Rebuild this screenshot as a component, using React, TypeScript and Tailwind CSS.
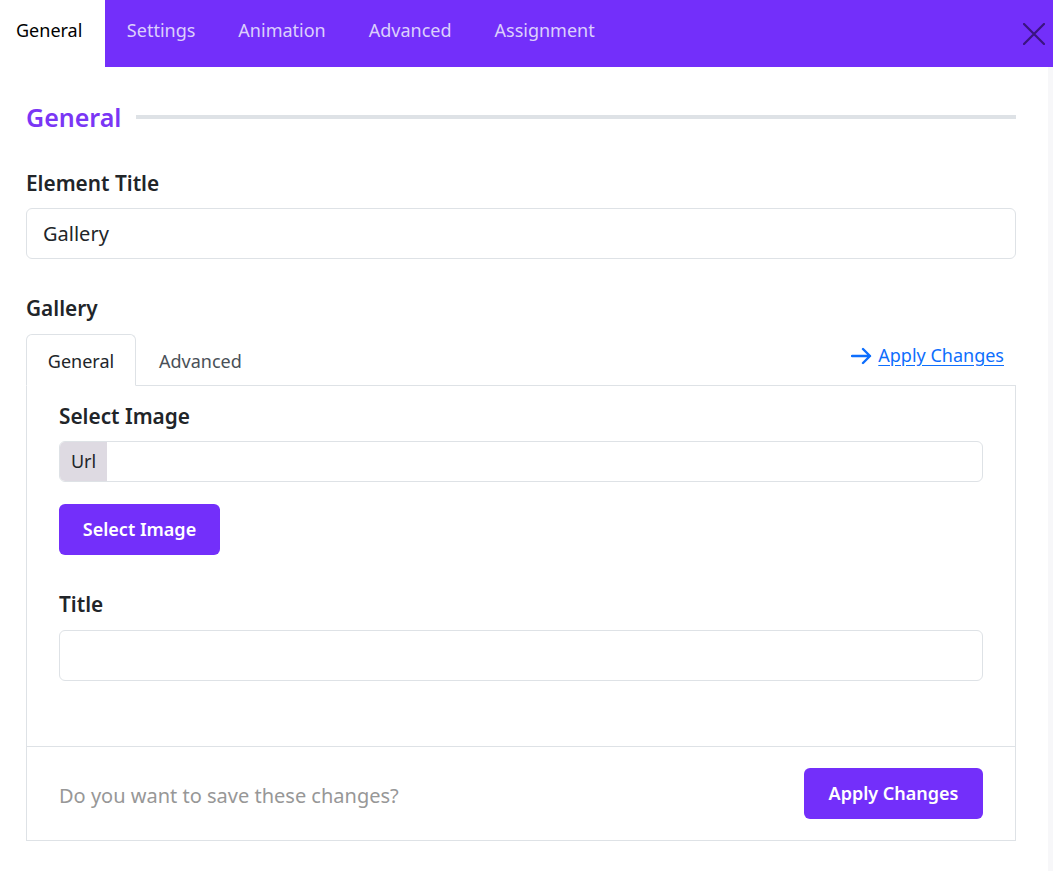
import React from "react";

const font = { fontFamily: '"Noto Sans", "Segoe UI", sans-serif' };

export default function App() {
  const tabs = ["Settings", "Animation", "Advanced", "Assignment"];
  return (
    <div className="w-[1053px] h-[871px] bg-white overflow-hidden text-[#212529]" style={font}>
      <div className="h-[67px] bg-[#732ffa] flex items-stretch">
        <div className="bg-white flex items-center pl-4 pr-[23px] pb-[7px] text-[18px] text-black">General</div>
        {tabs.map((t) => (
          <div key={t} className="flex items-center px-[21.5px] pb-[7px] text-[18px] text-[#dccffc]">
            {t}
          </div>
        ))}
        <div className="flex-1" />
        <div className="flex items-center pr-[8px]">
          <svg width="22" height="22" viewBox="0 0 22 22">
            <path d="M1 1 L21 21 M21 1 L1 21" stroke="#3a1480" strokeWidth="2.2" strokeLinecap="round" />
          </svg>
        </div>
      </div>
      <div className="flex h-[804px]">
        <div className="flex-1 px-[26px] pr-[32px]">
          <div className="mt-[34px] flex items-center gap-[15px]">
            <div className="text-[25px] leading-[32px] font-semibold text-[#7a36f5]">General</div>
            <div className="flex-1 h-[4px] bg-[#dee2e6]" />
          </div>
          <div className="mt-[35px] text-[20.8px] leading-[30px] font-semibold">Element Title</div>
          <div className="mt-[10px] h-[51px] border border-[#dee2e6] rounded-[6px] flex items-center px-4 text-[20px] text-[#212529]">
            Gallery
          </div>
          <div className="mt-[34px] text-[20.8px] leading-[30px] font-semibold">Gallery</div>
          <div className="mt-[11px]">
            <div className="flex border-b border-[#dee2e6] h-[52px]">
              <div className="-mb-px w-[110px] border border-[#dee2e6] border-b-white rounded-t-[6px] bg-white flex items-center justify-center pt-[2px] text-[18px] text-[#212529]">
                General
              </div>
              <div className="flex items-center px-[23px] pt-[3px] text-[18px] text-[#495057]">Advanced</div>
              <div className="flex-1" />
              <div className="flex items-start pt-[8px] pr-[12px]">
                <a className="flex items-center gap-[6px] text-[18px] text-[#0d6efd]">
                  <svg width="21" height="18" viewBox="0 0 21 18">
                    <path d="M1 9 H19 M12 2 L19 9 L12 16" stroke="#0d6efd" strokeWidth="2.4" fill="none" strokeLinecap="round" strokeLinejoin="round" />
                  </svg>
                  <span className="underline underline-offset-[3px]">Apply Changes</span>
                </a>
              </div>
            </div>
            <div className="border-x border-b border-[#dee2e6]">
              <div className="px-[32px] pt-[15px] pb-[65px]">
                <div className="text-[20.8px] leading-[30px] font-semibold">Select Image</div>
                <div className="mt-[10px] h-[41px] border border-[#dee2e6] rounded-[6px] flex overflow-hidden">
                  <div className="bg-[#dedae2] w-[47px] flex items-center justify-center text-[18px] text-[#212529]">Url</div>
                  <div className="flex-1" />
                </div>
                <button className="mt-[22px] h-[51px] w-[161px] bg-[#732ffa] rounded-[6px] text-white text-[18px] font-semibold">
                  Select Image
                </button>
                <div className="mt-[34px] text-[20.8px] leading-[30px] font-semibold">Title</div>
                <div className="mt-[11px] h-[51px] border border-[#dee2e6] rounded-[6px]" />
              </div>
              <div className="border-t border-[#dee2e6] px-[32px] py-[21px] flex items-center justify-between">
                <div className="text-[20px] text-[#979797] pt-[4px]">Do you want to save these changes?</div>
                <button className="h-[51px] w-[179px] bg-[#732ffa] rounded-[6px] text-white text-[18px] font-semibold">
                  Apply Changes
                </button>
              </div>
            </div>
          </div>
        </div>
        <div className="w-[5px] bg-[#f7f7f9]" />
      </div>
    </div>
  );
}
